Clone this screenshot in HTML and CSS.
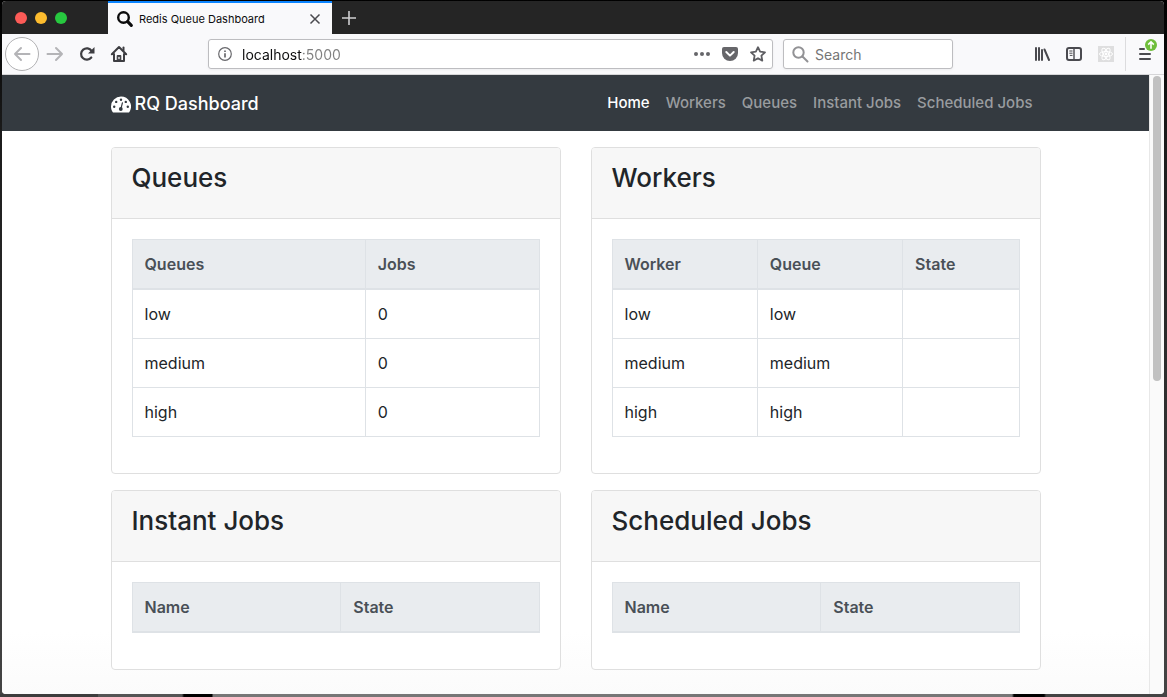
FILE: index.html
```html
<!DOCTYPE html>
<html lang="en">
<head>
<meta charset="utf-8">
<title>Redis Queue Dashboard</title>
<link rel="stylesheet" href="styles.css">
</head>
<body>
<div class="window">
  <header class="tabstrip">
    <div class="lights">
      <button class="light light-close" aria-label="Close window"></button>
      <button class="light light-min" aria-label="Minimize window"></button>
      <button class="light light-max" aria-label="Zoom window"></button>
    </div>
    <div class="tab">
      <svg class="favicon" width="18" height="18" viewBox="0 0 18 18" fill="none" stroke="#0c0c0d"><circle cx="7.500" cy="7.500" r="5.300" stroke-width="2.400"/><path d="M11.700 11.700l3.600 3.600" stroke-width="3.200" stroke-linecap="round"/></svg>
      <span class="tab-title">Redis Queue Dashboard</span>
      <button class="icon-button tab-close" aria-label="Close tab"><svg width="12" height="12" viewBox="0 0 12 12" stroke="#4a4a4f" stroke-width="1.5"><path d="M1.500 1.500l9 9M10.500 1.500l-9 9"/></svg></button>
    </div>
    <button class="icon-button new-tab" aria-label="New tab"><svg width="14" height="14" viewBox="0 0 14 14" stroke="#cfcfd1" stroke-width="1.600"><path d="M7 0v14M0 7h14"/></svg></button>
  </header>

  <nav class="toolbar" aria-label="Browser">
    <button class="icon-button back" aria-label="Back"><svg width="18" height="16" viewBox="0 0 18 16" fill="none" stroke="#b4b4b7" stroke-width="2" stroke-linecap="round" stroke-linejoin="round"><path d="M16.500 8H2M8 2L2 8l6 6"/></svg></button>
    <button class="icon-button tool" aria-label="Forward"><svg width="18" height="16" viewBox="0 0 18 16" fill="none" stroke="#b4b4b7" stroke-width="2" stroke-linecap="round" stroke-linejoin="round"><path d="M1.500 8H16M10 2l6 6-6 6"/></svg></button>
    <button class="icon-button tool" aria-label="Reload"><svg width="16" height="16" viewBox="0 0 16 16"><path d="M12.300 11.500A5.700 5.700 0 1 1 12.600 4.900" fill="none" stroke="#3e3e42" stroke-width="2.200" stroke-linecap="round"/><path d="M15.500 1v6.500H9z" fill="#3e3e42"/></svg></button>
    <button class="icon-button tool" aria-label="Home"><svg width="18" height="18" viewBox="0 0 18 18" fill="none" stroke="#3e3e42" stroke-width="2" stroke-linecap="round" stroke-linejoin="round"><path d="M1.800 9.200L9 2l7.200 7.200M4 9v7h10V9"/><path d="M13.500 2.500v3"/><path d="M7.200 16v-5.500h3.600V16z" fill="#3e3e42" stroke-width="1"/><path d="M9 12.500v1" stroke="#f9f9fa" stroke-width="1.300"/></svg></button>
    <span class="spring"></span>
    <div class="field url-field">
      <svg width="14" height="14" viewBox="0 0 14 14" fill="none" stroke="#68686c"><circle cx="7" cy="7" r="6.300" stroke-width="1.200"/><path d="M7 6.200v4.300M7 3.400v1.500" stroke-width="1.700"/></svg>
      <input class="url-input" type="text" value="localhost:5000" aria-label="Address">
      <button class="icon-button page-action" aria-label="Page actions"><svg width="18" height="16" viewBox="0 0 18 16" fill="#66666a"><circle cx="3" cy="8" r="2"/><circle cx="9" cy="8" r="2"/><circle cx="15" cy="8" r="2"/></svg></button>
      <button class="icon-button page-action" aria-label="Save to Pocket"><svg width="16" height="16" viewBox="0 0 16 16"><path d="M2 1h12a2 2 0 0 1 2 2v4a8 8 0 0 1-16 0V3a2 2 0 0 1 2-2z" fill="#66666a"/><path d="M4.300 6L8 9.600 11.700 6" fill="none" stroke="#fff" stroke-width="2" stroke-linecap="round" stroke-linejoin="round"/></svg></button>
      <button class="icon-button page-action" aria-label="Bookmark this page"><svg width="16" height="16" viewBox="0 0 16 16" fill="none" stroke="#5e5e62" stroke-width="1.800" stroke-linejoin="round"><path d="M8 1.200l2.100 4.500 4.900.6-3.600 3.400.9 4.900L8 12.200l-4.300 2.400.9-4.900L1 6.300l4.900-.6z"/></svg></button>
    </div>
    <div class="field search-field">
      <svg width="17" height="17" viewBox="0 0 17 17" fill="none" stroke="#929295" stroke-width="2" stroke-linecap="round"><circle cx="6.500" cy="6.500" r="5.200"/><path d="M10.500 10.500l5 5"/></svg>
      <input class="search-input" type="search" placeholder="Search" aria-label="Search">
    </div>
    <span class="spring"></span>
    <button class="icon-button tool" aria-label="Library"><svg width="16" height="16" viewBox="0 0 16 16" stroke="#4a4a4f" stroke-width="2" stroke-linecap="round"><path d="M2 2v12M5 2v12M8 4v10M10.500 3.500L15 14"/></svg></button>
    <button class="icon-button tool" aria-label="Sidebars"><svg width="16" height="16" viewBox="0 0 16 16" fill="none" stroke="#4a4a4f"><rect x="1" y="2" width="14" height="12" rx="2" stroke-width="2"/><path d="M8 2v12" stroke-width="1.400"/><path d="M3.300 5h3.200M3.300 7.200h3.200M3.800 9.400h2.700" stroke-width="1"/></svg></button>
    <button class="icon-button tool" aria-label="React Developer Tools"><svg width="16" height="16" viewBox="0 0 16 16"><path d="M0 0h16v16H0z" fill="#dededf"/><g fill="none" stroke="#fff" stroke-width="1"><ellipse cx="8" cy="8" rx="6.500" ry="2.500"/><ellipse cx="8" cy="8" rx="6.500" ry="2.500" transform="rotate(60 8 8)"/><ellipse cx="8" cy="8" rx="6.500" ry="2.500" transform="rotate(120 8 8)"/></g><circle cx="8" cy="8" r="1.400" fill="#fff"/></svg></button>
    <span class="divider"></span>
    <button class="icon-button tool menu" aria-label="Open menu"><svg width="14" height="14" viewBox="0 0 14 14" stroke="#4a4a4f" stroke-width="2" stroke-linecap="round"><path d="M2 2h4M2 7h10M2 12h10"/></svg><svg class="update-badge" width="12" height="12" viewBox="0 0 12 12"><circle cx="6" cy="6" r="6" fill="#6fbe3b"/><path d="M6 9.800V3.500M3.200 5.600L6 2.800l2.800 2.800" fill="none" stroke="#fff" stroke-width="1.600"/></svg></button>
  </nav>

  <div class="viewport">
    <div class="page">
      <nav class="navbar" aria-label="Main">
        <div class="container navbar-inner">
          <a class="brand" href="#"><svg width="20" height="17" viewBox="0 0 20 17"><path d="M10 .5A10 10 0 0 0 0 10.500c0 2 .6 3.900 1.600 5.400.2.400.6.600 1 .6h14.800c.4 0 .8-.2 1-.6A10 10 0 0 0 10 .5z" fill="#fff"/><g fill="#343a40"><circle cx="3.200" cy="10.700" r="1.200"/><circle cx="5.200" cy="5.900" r="1.200"/><circle cx="10" cy="3.800" r="1.200"/><circle cx="14.800" cy="5.900" r="1.200"/><circle cx="16.800" cy="10.700" r="1.200"/><circle cx="9.800" cy="13" r="1.900"/></g><path d="M9.900 12.800l1.500-6" stroke="#343a40" stroke-width="1.200" stroke-linecap="round"/></svg>RQ Dashboard</a>
          <div class="nav-links">
            <a class="nav-link active" href="#">Home</a>
            <a class="nav-link" href="#workers">Workers</a>
            <a class="nav-link" href="#queues">Queues</a>
            <a class="nav-link" href="#instant">Instant Jobs</a>
            <a class="nav-link" href="#scheduled">Scheduled Jobs</a>
          </div>
        </div>
      </nav>
      <main class="container cards">
        <section class="card" id="queues">
          <h3 class="card-header">Queues</h3>
          <div class="card-body">
            <table class="table">
              <colgroup><col class="col-queue"><col></colgroup>
              <thead><tr><th>Queues</th><th>Jobs</th></tr></thead>
              <tbody>
                <tr><td>low</td><td>0</td></tr>
                <tr><td>medium</td><td>0</td></tr>
                <tr><td>high</td><td>0</td></tr>
              </tbody>
            </table>
          </div>
        </section>
        <section class="card" id="workers">
          <h3 class="card-header">Workers</h3>
          <div class="card-body">
            <table class="table">
              <colgroup><col class="col-worker"><col class="col-worker"><col></colgroup>
              <thead><tr><th>Worker</th><th>Queue</th><th>State</th></tr></thead>
              <tbody>
                <tr><td>low</td><td>low</td><td></td></tr>
                <tr><td>medium</td><td>medium</td><td></td></tr>
                <tr><td>high</td><td>high</td><td></td></tr>
              </tbody>
            </table>
          </div>
        </section>
        <section class="card" id="instant">
          <h3 class="card-header">Instant Jobs</h3>
          <div class="card-body">
            <table class="table">
              <colgroup><col class="col-name"><col></colgroup>
              <thead><tr><th>Name</th><th>State</th></tr></thead>
            </table>
          </div>
        </section>
        <section class="card" id="scheduled">
          <h3 class="card-header">Scheduled Jobs</h3>
          <div class="card-body">
            <table class="table">
              <colgroup><col class="col-name"><col></colgroup>
              <thead><tr><th>Name</th><th>State</th></tr></thead>
            </table>
          </div>
        </section>
      </main>
    </div>
    <div class="scrollbar"><div class="thumb"></div></div>
  </div>
</div>
</body>
</html>
```
FILE: styles.css
```css
* { box-sizing: border-box; }

body {
  display: flex;
  min-height: 100vh;
  margin: 0;
  padding: 1px 3px 3px 2px;
  background:
    linear-gradient(90deg, #3d3d3d 98px, #555 98px 182px, #000 184px 212px, #777 213px 1012px, #000 1014px 1044px, #444 1046px) bottom / 100% 3px no-repeat,
    linear-gradient(#000, #1c1c1c 20%, #444);
  font-family: Inter, "Liberation Sans", sans-serif;
  font-size: 16px;
  line-height: 24px;
  color: #212529;
}

a { text-decoration: none; }

.window {
  display: flex;
  flex: 1;
  flex-direction: column;
  min-width: 0;
  overflow: hidden;
  border-radius: 4px;
  background: #fff;
}

.icon-button {
  display: flex;
  flex: none;
  align-items: center;
  justify-content: center;
  padding: 0;
  border: 0;
  background: none;
}

.tabstrip {
  display: flex;
  height: 33px;
  background: #252525;
}

.lights {
  display: flex;
  flex: none;
  align-items: center;
  gap: 8px;
  width: 106px;
  padding-left: 13px;
}

.light {
  width: 12px;
  height: 12px;
  padding: 0;
  border: 0;
  border-radius: 50%;
}

.light-close { background: #fc5b57; }
.light-min { background: #fdbc2e; }
.light-max { background: #27c83f; }

.tab {
  display: flex;
  flex: none;
  align-items: center;
  width: 224px;
  padding: 0 11px 0 8px;
  border-top: 2px solid #0a84ff;
  background: #f9f9fb;
  color: #0c0c0d;
  font-size: 11px;
}

.tab-title {
  flex: 1;
  margin-left: 5px;
}

.new-tab { padding: 0 10px; }

.toolbar {
  display: flex;
  align-items: center;
  height: 41px;
  padding: 0 3px;
  border-bottom: 1px solid #d6d6d8;
  background: #f9f9fb;
}

.back {
  width: 34px;
  height: 34px;
  border: 1px solid #b1b1b3;
  border-radius: 50%;
  background: #fff;
}

.tool {
  width: 32px;
  height: 32px;
}

.spring {
  flex: 1;
  min-width: 8px;
  max-width: 73px;
}

.field {
  display: flex;
  align-items: center;
  height: 30px;
  border: 1px solid #bdbdc0;
  border-radius: 3px;
  background: #fff;
  box-shadow: 0 1px 3px rgba(0, 0, 0, 0.05);
}

.field svg { flex: none; }

.url-field {
  flex: 7;
  min-width: 120px;
  margin-right: 10px;
  padding: 0 0 0 9px;
}

.search-field {
  width: 170px;
  padding: 0 8px;
}

.url-input,
.search-input {
  flex: 1;
  min-width: 0;
  padding: 0;
  border: 0;
  outline: 0;
  background: none;
  font: 14px Inter, "Liberation Sans", sans-serif;
}

.url-input {
  margin-left: 10px;
  background: linear-gradient(90deg, #0c0c0d 60px, #808080 60px);
  background-clip: text;
  color: transparent;
}

.search-input { margin-left: 6px; }
.search-input::placeholder { color: #757575; }

.page-action {
  width: 28px;
  height: 28px;
}

.divider {
  width: 1px;
  height: 34px;
  margin: 0 3px;
  background: #dcdcde;
}

.menu { position: relative; }

.update-badge {
  position: absolute;
  top: 1px;
  right: 4px;
}

.viewport {
  display: flex;
  flex: 1;
}

.page {
  flex: 1;
  min-width: 0;
  background: linear-gradient(#fff 90%, #fbfbfb);
}

.scrollbar {
  width: 15px;
  padding: 1px 3px;
  border-left: 1px solid #e8e8e8;
  background: #fafafa;
}

.thumb {
  width: 8px;
  height: 49.5%;
  border-radius: 4px;
  background: #c1c1c1;
}

.container {
  max-width: 960px;
  margin: 0 auto;
  padding: 0 15px;
}

.navbar {
  background: #343a40;
}

.navbar-inner {
  display: flex;
  align-items: center;
  justify-content: space-between;
  min-height: 56px;
}

.brand {
  display: flex;
  align-items: center;
  gap: 4px;
  padding-top: 2px;
  color: #fff;
  font-size: 18px;
  font-weight: 500;
}

.nav-links { display: flex; }

.nav-link {
  padding: 8px;
  color: #999c9f;
  font-size: 15px;
  font-weight: 500;
}

.nav-link.active { color: #fff; }

.cards {
  display: grid;
  grid-template-columns: 1fr 1fr;
  gap: 16px 30px;
  padding-top: 16px;
  padding-bottom: 16px;
}

.card {
  border: 1px solid #dfdfdf;
  border-radius: 4px;
  background: #fff;
}

.card-header {
  margin: 0;
  padding: 13px 20px 23px;
  border-bottom: 1px solid #dfdfdf;
  border-radius: 3px 3px 0 0;
  background: #f7f7f7;
  font-size: 26px;
  font-weight: 500;
  line-height: 34px;
}

.card-body { padding: 20px 20px 36px; }

.table {
  width: 100%;
  border: 1px solid #dee2e6;
  border-collapse: collapse;
  table-layout: fixed;
}

.table th,
.table td {
  height: 49px;
  padding: 12px;
  border: 1px solid #dee2e6;
  text-align: left;
}

.table th {
  border-bottom-width: 2px;
  background: #e9ecef;
  color: #495057;
  font-weight: 600;
}

.col-queue { width: 57.3%; }
.col-worker { width: 35.7%; }
.col-name { width: 51.3%; }
```
